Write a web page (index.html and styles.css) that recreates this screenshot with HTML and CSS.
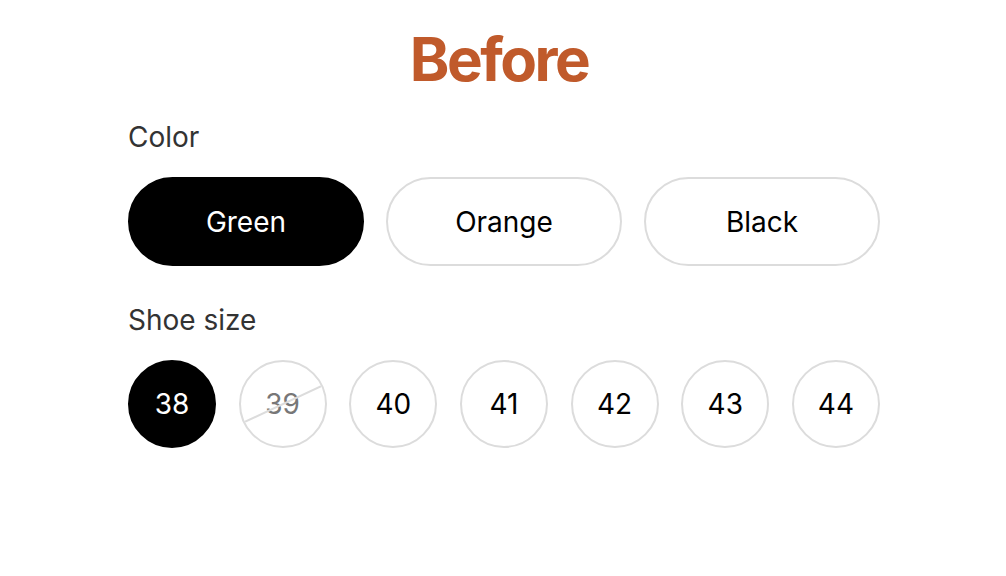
FILE: index.html
```html
<!DOCTYPE html>
<html>
<head>
<meta charset="utf-8">
<link rel="stylesheet" href="styles.css">
</head>
<body>
<main class="page">
  <h1 class="title">Before</h1>
  <section class="group">
    <div class="label">Color</div>
    <div class="pills">
      <button class="pill selected">Green</button>
      <button class="pill">Orange</button>
      <button class="pill">Black</button>
    </div>
  </section>
  <section class="group">
    <div class="label">Shoe size</div>
    <div class="sizes">
      <button class="size selected">38</button>
      <button class="size disabled">39</button>
      <button class="size">40</button>
      <button class="size">41</button>
      <button class="size">42</button>
      <button class="size">43</button>
      <button class="size">44</button>
    </div>
  </section>
</main>
</body>
</html>
```
FILE: styles.css
```css
html, body {
  margin: 0;
  padding: 0;
  background: #fff;
}
body {
  font-family: Inter, "Noto Sans", sans-serif;
}
.page {
  width: 752px;
  margin-left: calc(50% - 375px);
  padding-top: 23px;
}
.title {
  margin: 0 0 25px;
  padding-right: 10px;
  text-align: center;
  font-size: 60px;
  line-height: 72px;
  font-weight: 700;
  color: #c05a2b;
  letter-spacing: -2.5px;
}
.group {
  margin-bottom: 37px;
}
.label {
  font-size: 28px;
  line-height: 34px;
  color: #333;
  margin-bottom: 23px;
}
.pills {
  display: flex;
  gap: 22px;
}
.pill {
  flex: 1;
  height: 89px;
  border: 2px solid #dcdcdc;
  border-radius: 45px;
  background: #fff;
  color: #000;
  font-family: inherit;
  font-size: 28px;
  padding: 0;
}
.pill.selected, .size.selected {
  background: #000;
  border-color: #000;
  color: #fff;
}
.sizes {
  display: flex;
  justify-content: space-between;
}
.size {
  position: relative;
  width: 88px;
  height: 88px;
  border: 2px solid #dcdcdc;
  border-radius: 50%;
  background: #fff;
  color: #000;
  font-family: inherit;
  font-size: 28px;
  padding: 0;
  overflow: hidden;
}
.size.disabled {
  color: #777;
}
.size.disabled::after {
  content: "";
  position: absolute;
  left: 50%;
  top: 50%;
  width: 100px;
  height: 2px;
  background: #dcdcdc;
  transform: translate(-50%, -50%) rotate(-25deg);
}
```
